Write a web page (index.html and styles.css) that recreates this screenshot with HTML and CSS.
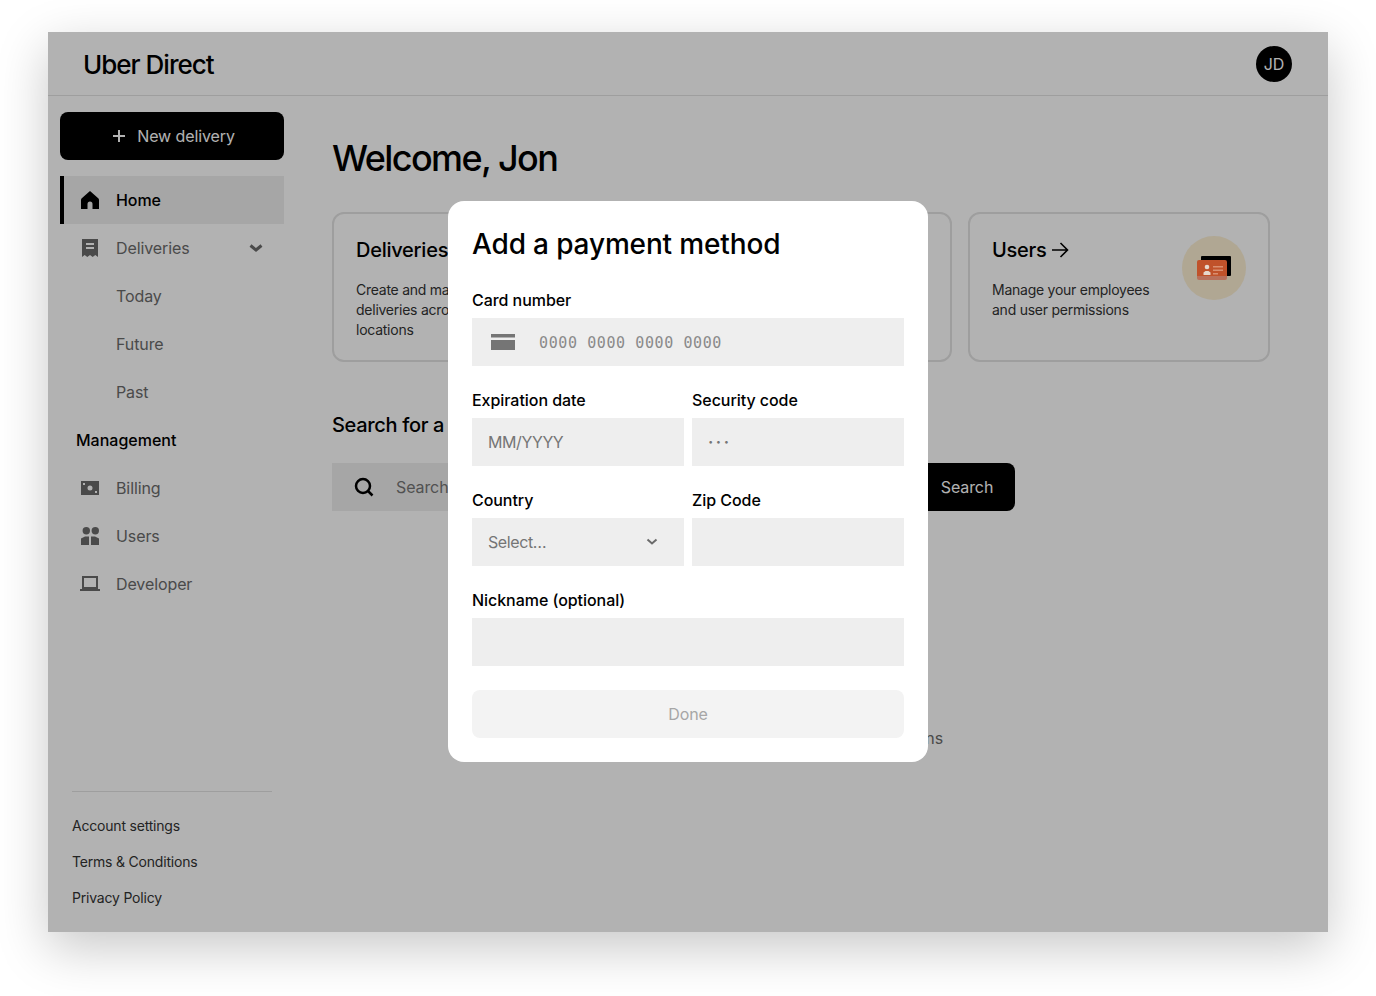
FILE: index.html
```html
<!DOCTYPE html>
<html lang="en">
<head>
<meta charset="utf-8">
<title>Uber Direct</title>
<link rel="stylesheet" href="styles.css">
</head>
<body>
<div class="window">
  <header class="topbar">
    <div class="logo">Uber Direct</div>
    <div class="avatar">JD</div>
  </header>
  <div class="body">
    <aside class="sidebar">
      <button class="new-btn">
        <svg class="plus" viewBox="0 0 12 12"><path d="M6 0v12M0 6h12"/></svg>
        <span>New delivery</span>
      </button>
      <nav class="nav">
        <a class="nav-item active">
          <svg class="ic" viewBox="0 0 24 24"><path d="M12 3l8.500 7.500q.5.500.5 1.500v9h-6.500v-5a2.500 2.500 0 0 0-5 0v5H3v-9q0-1 .5-1.500z"/></svg>
          <span>Home</span>
        </a>
        <a class="nav-item">
          <svg class="ic" viewBox="0 0 24 24"><path fill-rule="evenodd" d="M4 3h16v18l-2.700-2-2.600 2-2.700-2-2.700 2-2.600-2L4 21zM8 7v2h8V7zM8 11v2h8v-2z"/></svg>
          <span>Deliveries</span>
          <svg class="chev" viewBox="0 0 24 24"><path d="M6.500 9.500 12 14l5.500-4.500"/></svg>
        </a>
        <a class="nav-item sub">Today</a>
        <a class="nav-item sub">Future</a>
        <a class="nav-item sub">Past</a>
        <div class="nav-head">Management</div>
        <a class="nav-item">
          <svg class="ic" viewBox="0 0 24 24"><path fill-rule="evenodd" d="M3 5h18v14H3zM5 7v2h2V7zM17 15v2h2v-2zM12 9.500a2.500 2.500 0 1 0 0 5 2.500 2.500 0 0 0 0-5z"/></svg>
          <span>Billing</span>
        </a>
        <a class="nav-item">
          <svg class="ic" viewBox="0 0 24 24"><circle cx="8.300" cy="6.700" r="3.700"/><circle cx="17.300" cy="6.700" r="3.700"/><path d="M3 21v-6.500L7 12.500h4V21zM13 21v-8.500h4l4 2V21z"/></svg>
          <span>Users</span>
        </a>
        <a class="nav-item">
          <svg class="ic" viewBox="0 0 24 24"><path d="M5 5h14v11H5z" class="line"/><path d="M2 17h20v2H2z"/></svg>
          <span>Developer</span>
        </a>
      </nav>
      <div class="side-foot">
        <a class="foot-link">Account settings</a>
        <a class="foot-link">Terms &amp; Conditions</a>
        <a class="foot-link">Privacy Policy</a>
      </div>
    </aside>
    <main class="main">
      <h1 class="welcome">Welcome, Jon</h1>
      <section class="cards">
        <article class="card">
          <div class="card-text">
            <h2 class="card-title">Deliveries</h2>
            <p class="card-desc">Create and manage deliveries across locations</p>
          </div>
        </article>
        <article class="card"></article>
        <article class="card">
          <div class="card-text">
            <h2 class="card-title">Users
              <svg class="arrow" viewBox="0 0 20 20"><path d="M2 10h15.500M10.500 3l7 7-7 7"/></svg>
            </h2>
            <p class="card-desc">Manage your employees and user permissions</p>
          </div>
          <div class="illus">
            <svg viewBox="0 0 64 64" width="64" height="64">
              <circle cx="32" cy="32" r="32" fill="#b0a793"/>
              <rect x="19" y="20" width="30" height="20" rx="1" fill="#000"/>
              <path d="M15 26a2 2 0 0 1 2-2h26a2 2 0 0 1 2 2v14H15z" fill="#c0522a"/>
              <path d="M15 40h30v2a2 2 0 0 1-2 2H17a2 2 0 0 1-2-2z" fill="#b9705a"/>
              <circle cx="25" cy="31" r="2.300" fill="#e6d8cc"/>
              <path d="M21.500 39v-2.500l2-1.500h3l2 1.500V39z" fill="#e6d8cc"/>
              <path d="M31 30h10v1.500H31zM31 33.500h10V35H31zM31 37h5v1.500h-5z" fill="#d98f70"/>
            </svg>
          </div>
        </article>
      </section>
      <h2 class="search-title">Search for a</h2>
      <div class="search-row">
        <div class="search-box">
          <svg class="search-ic" viewBox="0 0 24 24"><circle cx="11" cy="11" r="7"/><path d="m16 16 4.500 4.500"/></svg>
          <span class="search-ph">Search</span>
        </div>
        <button class="search-btn">Search</button>
      </div>
      <p class="hint">Recent transactions</p>
    </main>
  </div>
  <div class="overlay">
    <form class="modal">
      <h2 class="modal-title">Add a payment method</h2>
      <div class="grid">
        <div class="field wide">
          <div class="label">Card number</div>
          <div class="input card-input">
            <svg class="card-ic" viewBox="0 0 24 16"><path d="M0 0h24v3.500H0zM0 6h24v10H0z"/></svg>
            <span class="mono">0000 0000 0000 0000</span>
          </div>
        </div>
        <div class="field">
          <div class="label">Expiration date</div>
          <div class="input">MM/YYYY</div>
        </div>
        <div class="field">
          <div class="label">Security code</div>
          <div class="input dots">···</div>
        </div>
        <div class="field">
          <div class="label">Country</div>
          <div class="input select">
            <span>Select…</span>
            <svg class="sel-chev" viewBox="0 0 12 8"><path d="M1.500 1.500 6 5.500l4.500-4"/></svg>
          </div>
        </div>
        <div class="field">
          <div class="label">Zip Code</div>
          <div class="input"></div>
        </div>
        <div class="field wide">
          <div class="label">Nickname (optional)</div>
          <div class="input"></div>
        </div>
      </div>
      <button class="done" type="button">Done</button>
    </form>
  </div>
</div>
</body>
</html>
```

FILE: styles.css
```css
* { box-sizing: border-box; }
html, body { margin: 0; height: 100%; }
body {
  background: #fff;
  padding: 32px 48px;
  height: 996px;
  overflow: hidden;
  font-family: Inter, "Liberation Sans", sans-serif;
  font-size: 16px;
  letter-spacing: -.1px;
  color: #000;
}
button { font: inherit; letter-spacing: inherit; border: 0; }
.window {
  position: relative;
  width: 1280px;
  height: 900px;
  background: #fff;
  display: flex;
  flex-direction: column;
  box-shadow: 0 16px 48px rgba(0, 0, 0, .22);
}
.topbar {
  height: 64px;
  flex: none;
  display: flex;
  align-items: center;
  justify-content: space-between;
  padding: 0 36px;
  border-bottom: 1px solid #e2e2e2;
}
.logo { font-size: 26px; font-weight: 500; letter-spacing: -1px; line-height: 32px; margin: 2px 0 0 -1px; }
.avatar {
  width: 36px; height: 36px; border-radius: 50%;
  background: #000; color: #fff;
  display: flex; align-items: center; justify-content: center;
}
.body { flex: 1; display: flex; min-height: 0; }
.sidebar {
  width: 236px;
  flex: none;
  padding: 16px 0 17px 12px;
  display: flex;
  flex-direction: column;
}
.new-btn {
  height: 48px; background: #000; color: #fff; border-radius: 8px;
  display: flex; align-items: center; justify-content: center; gap: 12px;
  padding-left: 10px;
  font-weight: 400;
}
.plus { width: 12px; height: 12px; fill: none; stroke: #fff; stroke-width: 2; }
.nav { margin-top: 16px; display: flex; flex-direction: column; }
.nav-item {
  height: 48px;
  display: flex;
  align-items: center;
  gap: 14px;
  padding-left: 18px;
  color: #6b6b6b;
  border-left: 0 solid #000;
}
.nav-item.active {
  background: #eee; color: #000; font-weight: 500;
  border-left-width: 4px; padding-left: 14px;
}
.nav-item.sub { padding-left: 56px; }
.nav-head { height: 48px; display: flex; align-items: center; padding-left: 16px; font-weight: 500; letter-spacing: 0; }
.ic { width: 24px; height: 24px; fill: #6b6b6b; flex: none; }
.active .ic { fill: #000; }
.ic .line { fill: none; stroke: #6b6b6b; stroke-width: 2; }
.chev {
  width: 24px; height: 24px; margin-left: auto; margin-right: 16px;
  fill: none; stroke: #6b6b6b; stroke-width: 3;
}
.side-foot {
  margin-top: auto;
  margin-left: 12px;
  margin-right: 12px;
  padding-top: 15px;
  border-top: 1px solid #e2e2e2;
  display: flex;
  flex-direction: column;
}
.foot-link { height: 36px; display: flex; align-items: center; font-size: 14px; letter-spacing: -.2px; color: #333; }
.main { flex: 1; padding: 40px 58px 0 48px; min-width: 0; }
.welcome { margin: 0; font-size: 36px; line-height: 44px; font-weight: 500; letter-spacing: -1.6px; }
.cards { margin-top: 32px; display: grid; grid-template-columns: repeat(3, 1fr); gap: 16px; }
.card {
  height: 150px;
  border: 2px solid #e2e2e2;
  border-radius: 12px;
  padding: 22px;
  display: flex;
  justify-content: space-between;
}
.card-text { width: 168px; }
.card-title {
  margin: 0; font-size: 20px; line-height: 28px; font-weight: 500; letter-spacing: -.25px;
  display: flex; align-items: center; gap: 3px; white-space: nowrap;
}
.arrow { width: 20px; height: 20px; fill: none; stroke: #000; stroke-width: 1.600; }
.card-desc { margin: 16px 0 0; font-size: 14px; line-height: 20px; letter-spacing: -.25px; color: #333; }
.illus { position: relative; z-index: 2; width: 64px; height: 64px; }
.illus svg { display: block; }
.search-title { margin: 51px 0 0; font-size: 20px; line-height: 24px; font-weight: 500; letter-spacing: -.33px; }
.search-row { margin-top: 26px; display: flex; gap: 8px; }
.search-box {
  width: 579px; height: 48px; background: #eee;
  display: flex; align-items: center; padding-left: 20px; gap: 20px;
}
.search-ic { width: 24px; height: 24px; fill: none; stroke: #000; stroke-width: 2.500; flex: none; }
.search-ph { color: #757575; white-space: nowrap; }
.search-btn { width: 96px; height: 48px; background: #000; color: #fff; border-radius: 8px; }
.hint { margin: 217px 0 0; width: 611px; text-align: right; color: #6b6b6b; line-height: 20px; white-space: nowrap; }
.overlay {
  position: absolute; inset: 0; z-index: 1;
  background: rgba(0, 0, 0, .3);
  display: flex; align-items: center; justify-content: center;
  padding-bottom: 1px;
}
.modal { width: 480px; height: 561px; background: #fff; border-radius: 16px; padding: 24px; }
.modal-title { margin: 0 0 28px; padding-top: 1px; font-size: 28px; line-height: 36px; font-weight: 500; letter-spacing: -.15px; }
.grid { display: grid; grid-template-columns: 1fr 1fr; column-gap: 8px; row-gap: 24px; }
.field { min-width: 0; }
.wide { grid-column: 1 / -1; }
.label { font-weight: 500; line-height: 20px; margin-bottom: 8px; letter-spacing: -.05px; }
.input {
  height: 48px; background: #eee; color: #757575; letter-spacing: -.4px;
  display: flex; align-items: center; padding: 0 16px;
}
.card-input { padding-left: 19px; gap: 24px; }
.card-ic { width: 24px; height: 16px; fill: #757575; flex: none; }
.mono { font-family: "DejaVu Sans Mono", monospace; font-size: 15px; line-height: 20px; padding-top: 2px; letter-spacing: .6px; white-space: pre; color: #8a8a8a; }
.dots { letter-spacing: 2.500px; font-weight: 700; }
.select { justify-content: space-between; padding-right: 26px; }
.sel-chev { width: 12px; height: 8px; fill: none; stroke: #6b6b6b; stroke-width: 2; }
.done {
  display: block; width: 100%; height: 48px; margin-top: 24px;
  background: #f3f3f3; color: #a6a6a6; border-radius: 8px;
}
```
